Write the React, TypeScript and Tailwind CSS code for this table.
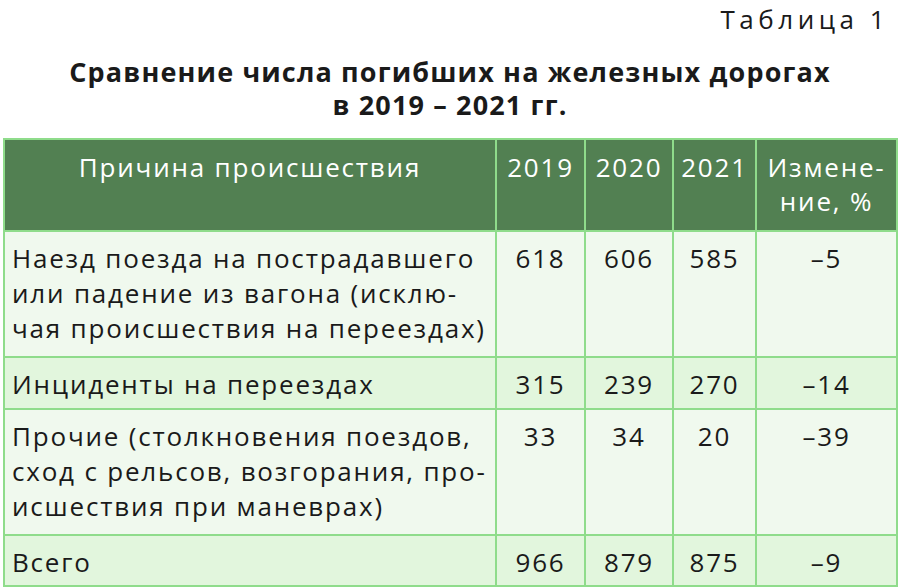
import React from "react";

type Row = {
  cause: string[];
  y2019: string;
  y2020: string;
  y2021: string;
  change: string;
  tone: "light" | "dark";
  height: string;
};

const rows: Row[] = [
  {
    cause: [
      "Наезд поезда на пострадавшего",
      "или падение из вагона (исклю-",
      "чая происшествия на переездах)",
    ],
    y2019: "618",
    y2020: "606",
    y2021: "585",
    change: "–5",
    tone: "light",
    height: "h-[126px]",
  },
  {
    cause: ["Инциденты на переездах"],
    y2019: "315",
    y2020: "239",
    y2021: "270",
    change: "–14",
    tone: "dark",
    height: "h-[52px]",
  },
  {
    cause: [
      "Прочие (столкновения поездов,",
      "сход с рельсов, возгорания, про-",
      "исшествия при маневрах)",
    ],
    y2019: "33",
    y2020: "34",
    y2021: "20",
    change: "–39",
    tone: "light",
    height: "h-[126px]",
  },
  {
    cause: ["Всего"],
    y2019: "966",
    y2020: "879",
    y2021: "875",
    change: "–9",
    tone: "dark",
    height: "h-[51px]",
  },
];

export default function App() {
  return (
    <div
      className="w-[900px] h-[588px] bg-white text-[#1a1a1a] overflow-hidden"
      style={{ fontFamily: '"Open Sans", "Noto Sans", sans-serif' }}
    >
      <div className="flex justify-end pr-[11px] pt-[3px] text-[26px] leading-[32px] tracking-[4.5px]">
        Таблица 1
      </div>
      {/* title: two centred bold lines */}
      <h1 className="mt-[20px] flex flex-col items-center text-[27px] font-bold leading-[33px] tracking-[1.15px]">
        <span>Сравнение числа погибших на железных дорогах</span>
        <span>в 2019 – 2021 гг.</span>
      </h1>
      <div className="px-[3px] mt-[17px]">
        <table className="w-[895px] table-fixed border-collapse text-[26px] leading-[35px] tracking-[1.8px]">
          <colgroup>
            <col className="w-[492px]" />
            <col className="w-[89px]" />
            <col className="w-[88px]" />
            <col className="w-[83px]" />
            <col className="w-[141px]" />
          </colgroup>
          <thead>
            <tr className="h-[92px] bg-[#528052] text-white">
              <th className="border-2 border-[#8fdc8b] pt-[10px] align-top font-normal">
                Причина происшествия
              </th>
              <th className="border-2 border-[#8fdc8b] pt-[10px] align-top font-normal">
                2019
              </th>
              <th className="border-2 border-[#8fdc8b] pt-[10px] align-top font-normal">
                2020
              </th>
              <th className="border-2 border-[#8fdc8b] pt-[10px] align-top font-normal">
                2021
              </th>
              <th className="border-2 border-[#8fdc8b] pt-[10px] align-top font-normal leading-[34px]">
                Измене-
                <br />
                ние, %
              </th>
            </tr>
          </thead>
          <tbody>
            {rows.map((r) => (
              <tr
                key={r.cause[0]}
                className={`${r.height} ${
                  r.tone === "light" ? "bg-[#f0f9ee]" : "bg-[#e2f6dd]"
                }`}
              >
                <td className="border-2 border-[#8fdc8b] px-[7px] pt-[9px] align-top whitespace-nowrap">
                  {r.cause.map((line) => (
                    <div key={line}>{line}</div>
                  ))}
                </td>
                <td className="border-2 border-[#8fdc8b] pt-[9px] align-top text-center">
                  {r.y2019}
                </td>
                <td className="border-2 border-[#8fdc8b] pt-[9px] align-top text-center">
                  {r.y2020}
                </td>
                <td className="border-2 border-[#8fdc8b] pt-[9px] align-top text-center">
                  {r.y2021}
                </td>
                <td className="border-2 border-[#8fdc8b] pt-[9px] align-top text-center">
                  {r.change}
                </td>
              </tr>
            ))}
          </tbody>
        </table>
      </div>
    </div>
  );
}
